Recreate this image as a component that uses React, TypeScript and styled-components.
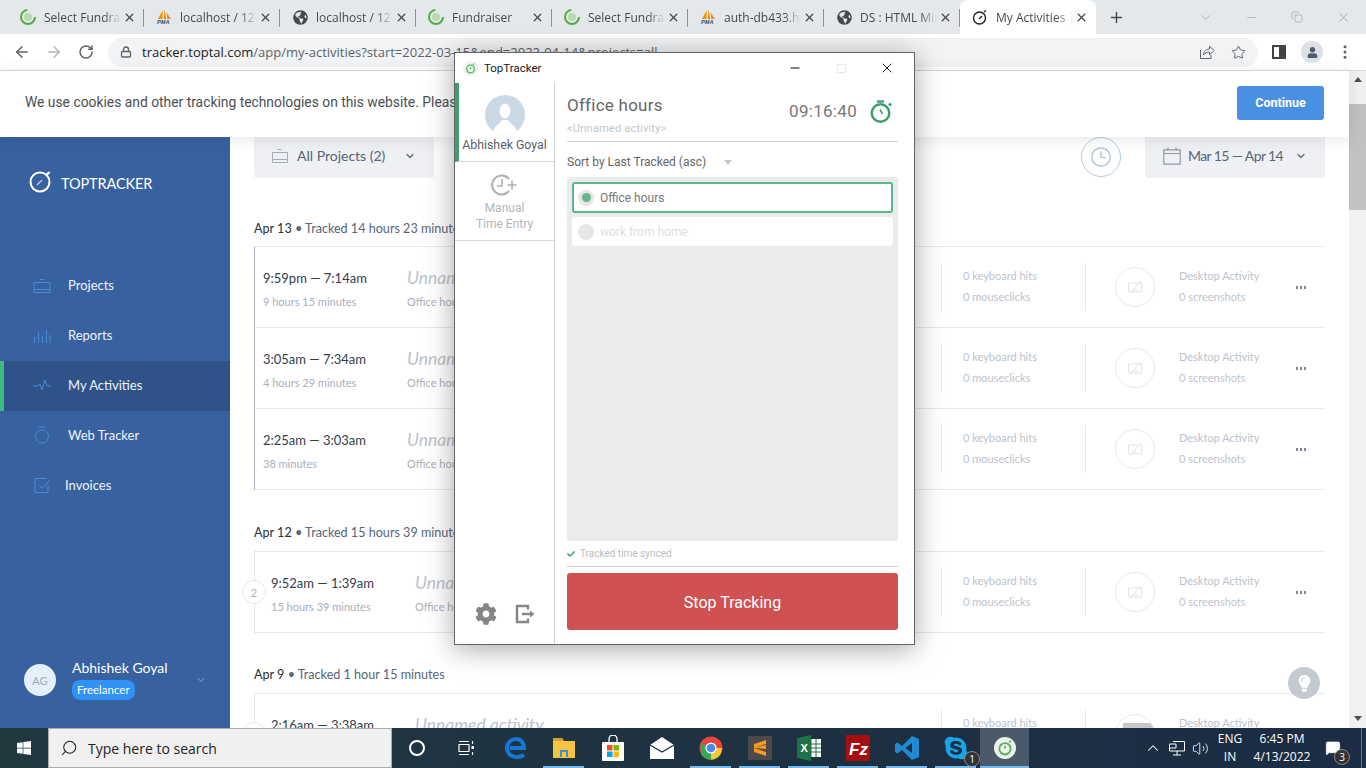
import React from "react";
import styled, { createGlobalStyle } from "styled-components";
import { ArrowLeft, ArrowRight, RotateCw, Lock, Star, MoreVertical, Plus, X, Minus, Square, Copy, ChevronDown, ChevronUp, Search, Volume2, MessageSquare } from "lucide-react";
import { FaGlobeAmericas, FaCog, FaWindows, FaSkype, FaLightbulb, FaCheck, FaUser } from "react-icons/fa";

const GlobalStyle = createGlobalStyle`
  html, body { margin: 0; padding: 0; height: 100%; overflow: hidden; background: #fff; }
  * { box-sizing: border-box; }
`;

const Screen = styled.div`
  position: relative;
  width: 1366px;
  height: 768px;
  display: flex;
  flex-direction: column;
  overflow: hidden;
  font-family: "Lato", sans-serif;
`;

/* browser chrome */
const TabStrip = styled.div`
  height: 34px;
  flex: none;
  display: flex;
  align-items: stretch;
  padding-left: 8px;
  background: #e5e8eb;
  font-family: "Open Sans", sans-serif;
`;
const Tab = styled.div<{ $active?: boolean }>`
  position: relative;
  width: 136px;
  display: flex;
  align-items: center;
  padding-left: 12px;
  background: ${({ $active }) => ($active ? "#fff" : "transparent")};
  border-radius: 8px 8px 0 0;
  &::after {
    content: "";
    display: ${({ $active }) => ($active ? "none" : "block")};
    position: absolute;
    right: 0;
    top: 9px;
    height: 18px;
    width: 1px;
    background: #8d9196;
  }
`;
const Favicon = styled.span`
  width: 16px;
  height: 16px;
  display: flex;
  align-items: center;
  justify-content: center;
  flex: none;
  color: #45494e;
`;
const TabTitle = styled.span`
  width: 77px;
  margin-left: 8px;
  font-size: 12px;
  color: #45494e;
  white-space: nowrap;
  overflow: hidden;
  -webkit-mask-image: linear-gradient(to right, #000 78%, transparent);
  mask-image: linear-gradient(to right, #000 78%, transparent);
`;
const TabClose = styled.span`
  margin-left: 2px;
  display: flex;
  color: #45494e;
`;
const NewTab = styled.span`
  display: flex;
  align-items: center;
  margin-left: 12px;
  color: #45494e;
`;
const WinControls = styled.div`
  margin-left: auto;
  display: flex;
  align-items: center;
  color: #8b8f94;
`;
const WinControl = styled.span`
  width: 46px;
  display: flex;
  justify-content: center;
`;

const Toolbar = styled.div`
  height: 37px;
  flex: none;
  display: flex;
  align-items: center;
  background: #fff;
  border-bottom: 1px solid #d8dadd;
`;
const NavButton = styled.span<{ $dim?: boolean }>`
  width: 32px;
  display: flex;
  justify-content: center;
  color: ${({ $dim }) => ($dim ? "#b4b7bb" : "#5f6368")};
  &:first-child { margin-left: 6px; }
`;
const UrlPill = styled.div`
  width: 1150px;
  height: 29px;
  margin-left: 6px;
  padding: 0 12px;
  display: flex;
  align-items: center;
  background: #f1f3f4;
  border-radius: 15px;
  font-family: "Open Sans", sans-serif;
  font-size: 13px;
  color: #5f6368;
  white-space: nowrap;
  overflow: hidden;
`;
const UrlHost = styled.span`
  margin-left: 10px;
  color: #202124;
`;
const PillIcons = styled.div`
  margin-left: auto;
  display: flex;
  gap: 16px;
  align-items: center;
  color: #5f6368;
`;
const ToolIcons = styled.div`
  display: flex;
  align-items: center;
  margin-left: 14px;
  color: #5f6368;
`;
const SidePanelIcon = styled.span`
  width: 14px;
  height: 14px;
  border: 2px solid #444;
  border-right-width: 7px;
`;
const ProfileBubble = styled.span`
  width: 22px;
  height: 22px;
  margin-left: 15px;
  border-radius: 50%;
  background: #dee1e6;
  color: #4b5a6c;
  display: flex;
  align-items: center;
  justify-content: center;
`;
const MenuDots = styled.span`
  display: flex;
  margin-left: 13px;
`;

/* page */
const Viewport = styled.div`
  flex: 1;
  min-height: 0;
  display: flex;
`;
const PageColumn = styled.div`
  flex: 1;
  min-width: 0;
  display: flex;
  flex-direction: column;
`;
const CookieBar = styled.div`
  position: relative;
  z-index: 2;
  height: 66px;
  flex: none;
  display: flex;
  align-items: center;
  justify-content: space-between;
  padding: 0 25px 3px;
  background: #fff;
  box-shadow: 0 2px 14px rgba(40, 50, 70, 0.12);
  font-family: "Roboto", sans-serif;
  font-size: 13.85px;
  color: #4c4f54;
`;
const CookieText = styled.span`
  margin-top: -2px;
`;
const ContinueButton = styled.button`
  width: 87px;
  height: 34px;
  border: none;
  border-radius: 3px;
  background: #4a90e2;
  color: #fff;
  font-family: "Roboto", sans-serif;
  font-size: 12.5px;
  font-weight: 700;
`;
const PageBody = styled.div`
  flex: 1;
  min-height: 0;
  display: flex;
`;
const Scrollbar = styled.div`
  width: 17px;
  flex: none;
  display: flex;
  flex-direction: column;
  align-items: center;
  background: #f1f1f1;
`;
const ScrollUp = styled.span`
  margin-top: 6px;
  border: 4px solid transparent;
  border-top: none;
  border-bottom: 5px solid #505050;
`;
const ScrollThumb = styled.div`
  width: 100%;
  height: 106px;
  margin-top: 22px;
  background: #c1c1c1;
`;
const ScrollDown = styled.span`
  margin-top: auto;
  margin-bottom: 7px;
  border: 4px solid transparent;
  border-bottom: none;
  border-top: 5px solid #505050;
`;

/* sidebar */
const Sidebar = styled.aside`
  width: 230px;
  flex: none;
  display: flex;
  flex-direction: column;
  background: #37629f;
  color: #fff;
`;
const Brand = styled.div`
  height: 124px;
  padding: 33px 0 0 29px;
  display: flex;
  align-items: flex-start;
  gap: 10px;
  font-size: 14.5px;
  line-height: 24px;
  letter-spacing: -0.1px;
`;
const BrandName = styled.span`
  padding-top: 2px;
`;
const NavItem = styled.div<{ $active?: boolean; $tight?: boolean }>`
  height: 50px;
  display: flex;
  align-items: center;
  padding-left: ${({ $active }) => ($active ? "29px" : "33px")};
  padding-bottom: 2px;
  gap: ${({ $tight }) => ($tight ? "14px" : "17px")};
  font-size: 13px;
  font-weight: 400;
  color: #eef3fb;
  background: ${({ $active }) => ($active ? "#2f5389" : "transparent")};
  border-left: ${({ $active }) => ($active ? "4px solid #3dbb83" : "none")};
`;
const UserBox = styled.div`
  margin: auto 0 32px 24px;
  height: 32px;
  display: flex;
  align-items: center;
  gap: 16px;
`;
const Initials = styled.span`
  width: 32px;
  height: 32px;
  flex: none;
  border-radius: 50%;
  background: #e6f0fb;
  color: #9aa8bb;
  display: flex;
  align-items: center;
  justify-content: center;
  font-size: 11px;
`;
const UserInfo = styled.div`
  width: 107px;
  align-self: flex-start;
  margin-top: -5px;
`;
const UserName = styled.div`
  font-size: 14px;
  line-height: 18px;
`;
const RoleBadge = styled.span`
  display: inline-block;
  margin-top: 3px;
  padding: 0 5px;
  height: 20px;
  line-height: 20px;
  border-radius: 8px;
  background: #3092f5;
  font-size: 11.5px;
  font-weight: 400;
`;
const UserChevron = styled.span`
  display: flex;
  color: #7ea6d8;
`;

/* content */
const Content = styled.main`
  position: relative;
  flex: 1;
  min-width: 0;
  padding: 0 24px;
  overflow: hidden;
`;
const FilterRow = styled.div`
  display: flex;
  align-items: flex-start;
`;
const Dropdown = styled.div`
  width: 180px;
  height: 41px;
  padding: 0 18px 4px;
  display: flex;
  align-items: center;
  background: #eff0f4;
  border-radius: 0 0 3px 3px;
  font-size: 14px;
  color: #56657a;
  &:first-child { margin-right: auto; }
`;
const DropLabel = styled.span<{ $tight?: boolean }>`
  margin-left: ${({ $tight }) => ($tight ? "7px" : "9px")};
  letter-spacing: ${({ $tight }) => ($tight ? "-0.6px" : "0")};
  white-space: nowrap;
`;
const DropChevron = styled.span`
  display: flex;
  margin-left: auto;
  color: #5c6675;
`;
const ClockButton = styled.span`
  width: 40px;
  height: 40px;
  margin-right: 24px;
  border-radius: 50%;
  border: 1px solid #b4cbdf;
  display: flex;
  align-items: center;
  justify-content: center;
`;
const DayHeading = styled.h3<{ $top: number; $bottom: number }>`
  margin: ${({ $top }) => $top}px 0 ${({ $bottom }) => $bottom}px;
  font-size: 12.6px;
  line-height: 18px;
  font-weight: 400;
  color: #56657a;
  white-space: nowrap;
`;
const DayDate = styled.span`
  color: #28303b;
`;
const RowGroup = styled.div<{ $stacked?: boolean }>`
  position: relative;
  border-top: 1px solid #e6e8ef;
  border-left: 1px solid ${({ $stacked }) => ($stacked ? "#aeb6c2" : "#e6e8ef")};
`;
const Row = styled.div<{ $indent?: boolean }>`
  height: 81px;
  display: flex;
  align-items: center;
  padding-left: ${({ $indent }) => ($indent ? "16px" : "8px")};
  border-bottom: 1px solid #e6e8ef;
`;
const TimeCol = styled.div`
  width: 144px;
  flex: none;
  padding-top: 6px;
`;
const TimeRange = styled.div`
  font-size: 13px;
  line-height: 18px;
  color: #333d4b;
  white-space: nowrap;
`;
const SubText = styled.div`
  margin-top: 6px;
  font-size: 11px;
  line-height: 18px;
  color: #a9afb9;
  white-space: nowrap;
`;
const NameCol = styled.div`
  flex: 1;
  min-width: 0;
  padding-top: 6px;
`;
const ActivityName = styled.div`
  font-size: 17.5px;
  line-height: 18px;
  font-style: italic;
  color: #bcc2cc;
  white-space: nowrap;
`;
const StatCol = styled.div`
  width: 144px;
  height: 48px;
  flex: none;
  padding: 0 0 2px 21px;
  border-left: 1px solid #e6e8ef;
  display: flex;
  flex-direction: column;
  justify-content: center;
  gap: 3px;
`;
const FaintLine = styled.div`
  font-size: 11px;
  line-height: 18px;
  color: #bcc2cc;
  white-space: nowrap;
`;
const ShotCol = styled.div`
  width: 240px;
  height: 48px;
  flex: none;
  padding-left: 29px;
  border-left: 1px solid #e6e8ef;
  display: flex;
  align-items: center;
`;
const ShotCircle = styled.span`
  width: 40px;
  height: 40px;
  flex: none;
  border-radius: 50%;
  border: 1px solid #e6e9f0;
  display: flex;
  align-items: center;
  justify-content: center;
  overflow: hidden;
`;
const ShotThumb = styled.span`
  width: 30px;
  height: 30px;
  margin: 8px 0 0 6px;
  background: #c8c8c8;
`;
const ShotText = styled.div`
  margin: -2px 0 0 24px;
  display: flex;
  flex-direction: column;
  gap: 3px;
`;
const MoreDots = styled.span`
  width: 12px;
  height: 3px;
  margin-left: auto;
  margin-right: 18px;
  background: radial-gradient(circle, #7f8896 1.2px, transparent 1.5px) 0 0 / 4px 3px repeat-x;
`;
const CountBadge = styled.span`
  position: absolute;
  left: -13px;
  top: 28px;
  width: 24px;
  height: 24px;
  border-radius: 50%;
  background: #fff;
  border: 1px solid #e6e8ef;
  color: #aab0bb;
  font-size: 11px;
  display: flex;
  align-items: center;
  justify-content: center;
`;
const HintButton = styled.span`
  position: absolute;
  right: 29px;
  bottom: 29px;
  width: 32px;
  height: 32px;
  border-radius: 50%;
  background: #c5c9d0;
  color: #fff;
  display: flex;
  align-items: center;
  justify-content: center;
`;

/* TopTracker desktop window */
const TrackerWindow = styled.section`
  position: absolute;
  z-index: 5;
  left: 454px;
  top: 52px;
  width: 461px;
  height: 593px;
  display: flex;
  flex-direction: column;
  background: #fff;
  border: 1px solid #666;
  box-shadow: 0 4px 26px rgba(0, 0, 0, 0.35);
  font-family: "Roboto", sans-serif;
`;
const TitleBar = styled.div`
  height: 30px;
  flex: none;
  display: flex;
  align-items: center;
  padding: 0 4px 0 8px;
  font-size: 11.5px;
  color: #1a1a1a;
`;
const TitleLabel = styled.span`
  margin-left: 6px;
  margin-right: auto;
`;
const TitleControl = styled.span<{ $muted?: boolean }>`
  width: 46px;
  display: flex;
  justify-content: center;
  color: ${({ $muted }) => ($muted ? "#c8c8c8" : "#000")};
`;
const WindowBody = styled.div`
  flex: 1;
  min-height: 0;
  display: flex;
`;
const LeftRail = styled.div`
  width: 100px;
  flex: none;
  display: flex;
  flex-direction: column;
  border-right: 1px solid #d0d0d0;
`;
const ProfileBlock = styled.div`
  height: 79px;
  padding: 12px 4px 0 0;
  display: flex;
  flex-direction: column;
  align-items: center;
  border-left: 4px solid #3e9e6e;
  border-bottom: 1px solid #d8d8d8;
  font-size: 12.3px;
  color: #5b6068;
  white-space: nowrap;
`;
const ProfileName = styled.span`
  margin-top: 2px;
  line-height: 16px;
`;
const AvatarCircle = styled.span`
  width: 40px;
  height: 40px;
  flex: none;
  border-radius: 50%;
  overflow: hidden;
  display: flex;
`;
const ManualBlock = styled.div`
  height: 79px;
  padding-top: 12px;
  display: flex;
  flex-direction: column;
  align-items: center;
  border-bottom: 1px solid #d8d8d8;
  font-size: 12px;
  line-height: 16px;
  color: #b5b5b5;
`;
const ManualLabel = styled.span`
  margin-top: 4px;
  text-align: center;
`;
const RailFooter = styled.div`
  margin-top: auto;
  padding: 0 0 19px 20px;
  display: flex;
  align-items: center;
  gap: 17px;
  color: #858585;
`;
const MainPane = styled.div`
  flex: 1;
  min-width: 0;
  display: flex;
  flex-direction: column;
  padding: 0 16px 14px 12px;
`;
const PaneHeader = styled.div`
  height: 59px;
  flex: none;
  display: flex;
  justify-content: space-between;
  padding: 11px 5px 0 0;
  border-bottom: 1px solid #cfcfcf;
`;
const PaneTitle = styled.div`
  font-size: 17px;
  line-height: 22px;
  letter-spacing: 0.25px;
  color: #666;
`;
const PaneSub = styled.div`
  margin-top: 5px;
  font-size: 11.4px;
  line-height: 14px;
  color: #c6c6c6;
`;
const TimerBox = styled.div`
  margin-top: 6px;
  height: 22px;
  display: flex;
  align-items: center;
  gap: 13px;
  font-size: 17px;
  letter-spacing: 0.3px;
  color: #777;
`;
const SortRow = styled.div`
  height: 35px;
  flex: none;
  padding-top: 5px;
  display: flex;
  align-items: center;
  font-size: 12px;
  color: #666;
`;
const SortArrow = styled.span`
  margin-left: 18px;
  border: 4px solid transparent;
  border-bottom: none;
  border-top: 5px solid #c8c8c8;
`;
const ProjectList = styled.div`
  flex: 1;
  min-height: 0;
  padding: 5px;
  display: flex;
  flex-direction: column;
  gap: 4px;
  background: #ebebeb;
  border-radius: 2px;
`;
const ProjectItem = styled.div<{ $selected?: boolean }>`
  height: ${({ $selected }) => ($selected ? "31px" : "29px")};
  padding-left: ${({ $selected }) => ($selected ? "4px" : "6px")};
  display: flex;
  align-items: center;
  gap: 6px;
  background: #fff;
  border: ${({ $selected }) => ($selected ? "2px solid #5cb88a" : "none")};
  border-radius: 3px;
  font-size: 12px;
  color: ${({ $selected }) => ($selected ? "#777" : "#dedede")};
`;
const ProjectDot = styled.span<{ $selected?: boolean }>`
  width: 16px;
  height: 16px;
  border-radius: 50%;
  background: #e6e6e6;
  display: flex;
  align-items: center;
  justify-content: center;
  &::after {
    content: "";
    display: ${({ $selected }) => ($selected ? "block" : "none")};
    width: 9px;
    height: 9px;
    border-radius: 50%;
    background: #66b58a;
  }
`;
const SyncRow = styled.div`
  height: 26px;
  flex: none;
  display: flex;
  align-items: center;
  gap: 5px;
  border-bottom: 1px solid #cfcfcf;
  font-size: 10px;
  color: #bdbdbd;
`;
const SyncCheck = styled.span`
  display: flex;
  color: #3c9e6a;
`;
const StopButton = styled.button`
  height: 57px;
  flex: none;
  margin-top: 6px;
  padding-top: 3px;
  border: none;
  border-radius: 3px;
  background: #cf5151;
  color: #fff;
  font-family: "Roboto", sans-serif;
  font-size: 16px;
`;

/* windows taskbar */
const Taskbar = styled.footer`
  height: 40px;
  flex: none;
  display: flex;
  align-items: stretch;
  background: linear-gradient(to right, #21383f, #1b2c44);
  color: #fff;
  font-family: "Open Sans", sans-serif;
`;
const StartButton = styled.span`
  width: 48px;
  display: flex;
  align-items: center;
  justify-content: center;
`;
const SearchBox = styled.div`
  width: 344px;
  display: flex;
  align-items: center;
  gap: 10px;
  padding-left: 11px;
  background: #f0f0f0;
  border: 1px solid #a9adb2;
  color: #222;
  font-size: 14px;
`;
const SearchGlass = styled.span`
  display: flex;
  transform: scaleX(-1);
`;
const TaskItem = styled.span<{ $open?: boolean; $active?: boolean }>`
  position: relative;
  width: 49px;
  display: flex;
  align-items: center;
  justify-content: center;
  background: ${({ $active }) => ($active ? "#4a5a6a" : "transparent")};
  &::after {
    content: "";
    display: ${({ $open }) => ($open ? "block" : "none")};
    position: absolute;
    left: ${({ $active }) => ($active ? "0" : "4px")};
    right: ${({ $active }) => ($active ? "0" : "4px")};
    bottom: 0;
    height: 2px;
    background: #76b9ed;
  }
`;
const CountDot = styled.span`
  position: absolute;
  right: 0;
  bottom: 1px;
  width: 16px;
  height: 16px;
  border-radius: 50%;
  background: #333;
  border: 1px solid #888;
  color: #fff;
  font-size: 10px;
  display: flex;
  align-items: center;
  justify-content: center;
`;
const Tray = styled.div`
  margin-left: auto;
  display: flex;
  align-items: center;
  font-size: 12px;
`;
const TrayIcon = styled.span<{ $w: number }>`
  width: ${({ $w }) => $w}px;
  display: flex;
  justify-content: center;
`;
const TrayText = styled.div<{ $w: number; $after: number }>`
  width: ${({ $w }) => $w}px;
  margin-right: ${({ $after }) => $after}px;
  text-align: center;
  line-height: 18px;
  white-space: nowrap;
`;
const Notification = styled.span`
  position: relative;
  width: 22px;
  display: flex;
  justify-content: center;
`;
const NotifCount = styled.span`
  position: absolute;
  right: -6px;
  bottom: -9px;
  width: 16px;
  height: 16px;
  border-radius: 50%;
  background: #333;
  border: 1px solid #888;
  font-size: 10px;
  display: flex;
  align-items: center;
  justify-content: center;
`;
const ShowDesktop = styled.span`
  position: relative;
  width: 22px;
  height: 100%;
  &::after {
    content: "";
    position: absolute;
    right: 4px;
    top: 0;
    bottom: 0;
    width: 1px;
    background: #6a7786;
  }
`;

/* drawings */
const FundIcon = () => (
  <svg width="16" height="16" viewBox="0 0 16 16">
    <circle cx="8" cy="8" r="7" fill="none" stroke="#4caf3f" strokeWidth="2" strokeDasharray="32 12" />
    <circle cx="8" cy="8" r="4" fill="#b9d8b0" />
  </svg>
);
const PmaIcon = () => (
  <svg width="17" height="16" viewBox="0 0 17 16">
    <path d="M2 10 L7 1 L7 10 Z M8 10 L9 0 L11 10 Z M12 10 L11 3 L16 10 Z" fill="#f29111" />
    <text x="1" y="15.5" fontSize="6" fontWeight="700" fontStyle="italic" fill="#33507f" fontFamily="Liberation Sans, sans-serif">PMA</text>
  </svg>
);
const StopwatchTab = () => (
  <svg width="16" height="16" viewBox="0 0 16 16" fill="none" stroke="#222" strokeWidth="1.4">
    <circle cx="7.5" cy="9" r="6" />
    <path d="M7 10 L10 7 M12 3 L14 1.5" />
  </svg>
);
const ShareGlyph = () => (
  <svg width="16" height="16" viewBox="0 0 16 16" fill="none" stroke="#5f6368" strokeWidth="1">
    <path d="M1.5 6 V14.5 H12 V11" />
    <path d="M4.5 11 C4.5 7 7.5 5 10.5 5 V2 L15 6.5 L10.5 11 V8 C8 8 6 8.8 4.5 11 Z" />
  </svg>
);
const LogoMark = () => (
  <svg width="22" height="24" viewBox="0 0 22 24" fill="none" stroke="#fff" strokeWidth="2">
    <circle cx="11" cy="12" r="9.5" />
    <path d="M8 15 L13 10" stroke="#b9cde8" strokeWidth="1.5" />
    <path d="M17.5 5 L20.5 2" strokeWidth="2.4" />
  </svg>
);
const NavIcon = ({ d, circle }: { d: string; circle?: boolean }) => (
  <svg width="18" height="18" viewBox="0 0 18 18" fill="none" stroke="#4a8bd8" strokeWidth="1">
    {circle && <circle cx="9" cy="10.5" r="6.5" />}
    <path d={d} />
  </svg>
);
const FolderGlyph = () => (
  <svg width="16" height="16" viewBox="0 0 16 16" fill="none" stroke="#a4adb9" strokeWidth="1">
    <path d="M.5 4.5 h15 v10 h-15 z M.5 11.5 h15 M5.5 1.5 h4" />
  </svg>
);
const CalendarGlyph = () => (
  <svg width="18" height="18" viewBox="0 0 18 18" fill="none" stroke="#8e99a8" strokeWidth="1.2">
    <path d="M.8 2.8 h16.4 v14.4 h-16.4 z M.8 6.5 h16.4 M5 .5 v3 M13 .5 v3" />
  </svg>
);
const ClockGlyph = () => (
  <svg width="20" height="20" viewBox="0 0 20 20" fill="none" stroke="#a4bdd5" strokeWidth="1.2">
    <circle cx="10" cy="10" r="9.2" />
    <path d="M10 4.5 V10.5 H15" />
  </svg>
);
const NoShotGlyph = () => (
  <svg width="16" height="14" viewBox="0 0 16 14" fill="none" stroke="#e0e4ea" strokeWidth="1">
    <path d="M1.5 3 h13 v9 h-13 z M3 13.5 L14 .5 M5 10 h6" />
  </svg>
);
const Stopwatch = () => (
  <svg width="23" height="23" viewBox="0 0 23 23" fill="none" stroke="#3c9e6a" strokeWidth="2.4">
    <circle cx="10.5" cy="13" r="8.8" />
    <path d="M7 1.5 h7" />
    <path d="M10 9.5 L12.5 14" strokeWidth="1.6" />
    <circle cx="20" cy="4.5" r="1.6" fill="#3c9e6a" stroke="none" />
  </svg>
);
const AppDot = ({ size = 14 }: { size?: number }) => (
  <svg width={size} height={size} viewBox="0 0 14 14" fill="none">
    <circle cx="7" cy="7" r="7" fill="#eef1ee" />
    <circle cx="7" cy="7.5" r="3.6" stroke="#56b45a" strokeWidth="1.2" />
    <path d="M7 5.5 V7.5 M9.5 3.5 L10.8 2.5" stroke="#56b45a" strokeWidth="1" />
  </svg>
);
const AvatarArt = () => (
  <svg width="40" height="40" viewBox="0 0 40 40">
    <rect width="40" height="40" fill="#cbd9e5" />
    <ellipse cx="20" cy="16" rx="5.5" ry="7.5" fill="#fff" />
    <path d="M7 40 C8 31 14 30 17 25 H23 C26 30 32 31 33 40 Z" fill="#fff" />
  </svg>
);
const ManualGlyph = () => (
  <svg width="27" height="22" viewBox="0 0 27 22" fill="none" stroke="#b0b0b0" strokeWidth="2">
    <path d="M18 5 A9.5 9.5 0 1 0 18 17" />
    <path d="M11 5 V12 H6" strokeWidth="1.6" />
    <path d="M21 6.5 V15.5 M16.5 11 H25.5" strokeWidth="1.6" />
  </svg>
);
const ExitGlyph = () => (
  <svg width="22" height="22" viewBox="0 0 22 22" fill="none" stroke="#858585" strokeWidth="2.4">
    <path d="M14 6.5 V3 H3 V19 H14 V15.5" />
    <path d="M8 11 H17" />
    <path d="M16 7.5 L20.5 11 L16 14.5 Z" fill="#858585" stroke="none" />
  </svg>
);
const EdgeIcon = () => (
  <svg width="24" height="24" viewBox="0 0 24 24" fill="none" stroke="#1478d4" strokeWidth="4">
    <path d="M21 19 C15 23 4 21 4 12 C4 5 12 1 17 4 C20 6 21 9 21 12 H7" />
  </svg>
);
const ExplorerIcon = () => (
  <svg width="24" height="22" viewBox="0 0 24 22">
    <path d="M1 1 H10 L12 4 H23 V21 H1 Z" fill="#f5c443" />
    <path d="M1 1 H10 L12 4 H1 Z" fill="#d99e25" />
    <path d="M8 20 V13 H16 V20 H14 V15 H10 V20 Z" fill="#3f8fd2" />
  </svg>
);
const StoreIcon = () => (
  <svg width="24" height="26" viewBox="0 0 24 26">
    <path d="M8 7 V4 A4 4 0 0 1 16 4 V7" fill="none" stroke="#fff" strokeWidth="1.3" />
    <rect x="1" y="7" width="22" height="19" rx="1" fill="#fff" />
    <rect x="6" y="10" width="5.5" height="5.5" fill="#f25022" />
    <rect x="12.5" y="10" width="5.5" height="5.5" fill="#7fba00" />
    <rect x="6" y="16.5" width="5.5" height="5.5" fill="#00a4ef" />
    <rect x="12.5" y="16.5" width="5.5" height="5.5" fill="#ffb900" />
  </svg>
);
const MailIcon = () => (
  <svg width="24" height="22" viewBox="0 0 24 22">
    <path d="M0 8 L12 0 L24 8 V22 H0 Z" fill="#fff" />
    <path d="M0 8 L12 15 L24 8" fill="none" stroke="#21363f" strokeWidth="1.4" />
  </svg>
);
const ChromeIcon = () => (
  <svg width="24" height="24" viewBox="0 0 24 24">
    <circle cx="12" cy="12" r="11.5" fill="#e8453c" />
    <path d="M12 12 L22 18 A11.5 11.5 0 0 1 2 18 L1.5 7 Z" fill="#3aa757" />
    <path d="M12 12 H23 A11.5 11.5 0 0 1 12 23.5 Z" fill="#fcc934" />
    <circle cx="12" cy="12" r="5.6" fill="#fff" />
    <circle cx="12" cy="12" r="4.3" fill="#4a8af4" />
  </svg>
);
const SublimeIcon = () => (
  <svg width="24" height="24" viewBox="0 0 24 24">
    <rect width="24" height="24" rx="2" fill="#4a4a4a" />
    <path d="M18 4 V8 L6 12 V8 Z M6 12 L18 16 V20 L6 16 Z M6 12 L18 9 V13 Z" fill="#f79a1d" />
  </svg>
);
const ExcelIcon = () => (
  <svg width="24" height="26" viewBox="0 0 24 26">
    <rect x="9" y="4" width="15" height="18" fill="#fff" />
    <path d="M14 4 V22 M19 4 V22 M9 9 H24 M9 13 H24 M9 17 H24" stroke="#1f7244" strokeWidth="1" />
    <path d="M0 3 L14 0 V26 L0 23 Z" fill="#1f7244" />
    <text x="3.5" y="17" fontSize="11" fontWeight="700" fill="#fff" fontFamily="Liberation Sans, sans-serif">X</text>
  </svg>
);
const FzIcon = () => (
  <svg width="24" height="26" viewBox="0 0 24 26">
    <rect width="24" height="26" fill="#a50f12" />
    <text x="3" y="20" fontSize="17" fontStyle="italic" fontWeight="700" fill="#fff" fontFamily="Liberation Sans, sans-serif">Fz</text>
  </svg>
);
const CodeIcon = () => (
  <svg width="24" height="24" viewBox="0 0 24 24">
    <path d="M17 0 L24 3 V21 L17 24 L7 14 L2.5 17.5 L0 16 V8 L2.5 6.5 L7 10 Z M17 7 L10.5 12 L17 17 Z" fill="#1f8ad2" fillRule="evenodd" />
  </svg>
);
const RingIcon = () => (
  <svg width="18" height="18" viewBox="0 0 18 18" fill="none" stroke="#fff" strokeWidth="2">
    <circle cx="9" cy="9" r="7" />
  </svg>
);
const TaskViewIcon = () => (
  <svg width="18" height="18" viewBox="0 0 18 18" fill="none" stroke="#fff" strokeWidth="1.2">
    <path d="M2 5.5 H12 V12.5 H2 Z M2 2.5 H12 M2 15.5 H12 M15.5 2 V5 M15.5 13 V16" />
    <rect x="14.5" y="7" width="2.4" height="3" fill="#fff" stroke="none" />
  </svg>
);
const NetworkIcon = () => (
  <svg width="18" height="16" viewBox="0 0 18 16" fill="none" stroke="#fff" strokeWidth="1">
    <path d="M5 1.5 H16.5 V11 H1.5 V4 H8 V8 H1.5 M9 11 V15 M5 15 H13" />
  </svg>
);

const tabs = [
  { title: "Select Fundraiser", icon: <FundIcon /> },
  { title: "localhost / 127.0.0.1", icon: <PmaIcon /> },
  { title: "localhost / 127.0.0.1", icon: <FaGlobeAmericas size={15} /> },
  { title: "Fundraiser", icon: <FundIcon /> },
  { title: "Select Fundraiser", icon: <FundIcon /> },
  { title: "auth-db433.hstgr.io", icon: <PmaIcon /> },
  { title: "DS : HTML Minifier", icon: <FaGlobeAmericas size={15} /> },
  { title: "My Activities | TopTracker", icon: <StopwatchTab />, active: true },
];

const navItems = [
  { label: "Projects", d: "M1 6.5 h16 v10 h-16 z M1 13.5 h16 M6.5 3.5 h5" },
  { label: "Reports", d: "M1.5 17 v-6 M5.5 17 v-11 M9.5 17 v-7 M13.5 17 v-13 M17 17 v-8" },
  { label: "My Activities", d: "M0 10 h5 l2 -2 l2 6 l3 -10 l2 6 h4", active: true },
  { label: "Web Tracker", d: "M5.5 1 h7", circle: true },
  { label: "Invoices", d: "M13 2.5 h-11 v14 h13 v-7 M6 9 l3.5 3.5 l7 -8", tight: true },
];

type Entry = { time: string; length: string; thumb?: boolean };
type Day = { date: string; tracked: string; top: number; bottom: number; stacked?: boolean; indent?: boolean; badge?: number; rows: Entry[] };
const days: Day[] = [
  {
    date: "Apr 13",
    tracked: "Tracked 14 hours 23 minutes",
    top: 42,
    bottom: 8,
    stacked: true,
    rows: [
      { time: "9:59pm — 7:14am", length: "9 hours 15 minutes" },
      { time: "3:05am — 7:34am", length: "4 hours 29 minutes" },
      { time: "2:25am — 3:03am", length: "38 minutes" },
    ],
  },
  {
    date: "Apr 12",
    tracked: "Tracked 15 hours 39 minutes",
    top: 34,
    bottom: 9,
    indent: true,
    badge: 2,
    rows: [{ time: "9:52am — 1:39am", length: "15 hours 39 minutes" }],
  },
  {
    date: "Apr 9",
    tracked: "Tracked 1 hour 15 minutes",
    top: 33,
    bottom: 9,
    indent: true,
    badge: 2,
    rows: [{ time: "2:16am — 3:38am", length: "1 hour 15 minutes", thumb: true }],
  },
];

const taskItems = [
  { icon: <RingIcon /> },
  { icon: <TaskViewIcon /> },
  { icon: <EdgeIcon /> },
  { icon: <ExplorerIcon />, open: true },
  { icon: <StoreIcon /> },
  { icon: <MailIcon /> },
  { icon: <ChromeIcon />, open: true },
  { icon: <SublimeIcon />, open: true },
  { icon: <ExcelIcon />, open: true },
  { icon: <FzIcon />, open: true },
  { icon: <CodeIcon />, open: true },
  { icon: <FaSkype size={26} color="#16a5e6" />, open: true, count: 1 },
  { icon: <AppDot size={22} />, open: true, active: true },
];

export default function App() {
  return (
    <Screen>
      <GlobalStyle />
      <TabStrip>
        {tabs.map((tab, i) => (
          <Tab key={i} $active={tab.active}>
            <Favicon>{tab.icon}</Favicon>
            <TabTitle>{tab.title}</TabTitle>
            <TabClose>
              <X size={13} strokeWidth={2.4} />
            </TabClose>
          </Tab>
        ))}
        <NewTab>
          <Plus size={17} strokeWidth={2} />
        </NewTab>
        <WinControls>
          <WinControl>
            <ChevronDown size={15} strokeWidth={1} />
          </WinControl>
          <WinControl>
            <Minus size={13} strokeWidth={1} />
          </WinControl>
          <WinControl>
            <Copy size={12} strokeWidth={1} />
          </WinControl>
          <WinControl>
            <X size={15} strokeWidth={1} />
          </WinControl>
        </WinControls>
      </TabStrip>

      <Toolbar>
        <NavButton>
          <ArrowLeft size={18} strokeWidth={2} />
        </NavButton>
        <NavButton $dim>
          <ArrowRight size={18} strokeWidth={2} />
        </NavButton>
        <NavButton>
          <RotateCw size={16} strokeWidth={2.2} />
        </NavButton>
        <UrlPill>
          <Lock size={12} strokeWidth={2.6} />
          <UrlHost>tracker.toptal.com</UrlHost>
          /app/my-activities?start=2022-03-15&end=2022-04-14&projects=all
          <PillIcons>
            <ShareGlyph />
            <Star size={15} strokeWidth={1.6} />
          </PillIcons>
        </UrlPill>
        <ToolIcons>
          <SidePanelIcon />
          <ProfileBubble>
            <FaUser size={11} />
          </ProfileBubble>
          <MenuDots>
            <MoreVertical size={18} />
          </MenuDots>
        </ToolIcons>
      </Toolbar>

      <Viewport>
        <PageColumn>
          <CookieBar>
            <CookieText>We use cookies and other tracking technologies on this website. Please see our policy.</CookieText>
            <ContinueButton>Continue</ContinueButton>
          </CookieBar>
          <PageBody>
            <Sidebar>
              <Brand>
                <LogoMark />
                <BrandName>TOPTRACKER</BrandName>
              </Brand>
              {navItems.map((item) => (
                <NavItem key={item.label} $active={item.active} $tight={item.tight}>
                  <NavIcon d={item.d} circle={item.circle} />
                  {item.label}
                </NavItem>
              ))}
              <UserBox>
                <Initials>AG</Initials>
                <UserInfo>
                  <UserName>Abhishek Goyal</UserName>
                  <RoleBadge>Freelancer</RoleBadge>
                </UserInfo>
                <UserChevron>
                  <ChevronDown size={12} />
                </UserChevron>
              </UserBox>
            </Sidebar>
            <Content>
              <FilterRow>
                <Dropdown>
                  <FolderGlyph />
                  <DropLabel>All Projects (2)</DropLabel>
                  <DropChevron>
                    <ChevronDown size={12} strokeWidth={2.4} />
                  </DropChevron>
                </Dropdown>
                <ClockButton>
                  <ClockGlyph />
                </ClockButton>
                <Dropdown>
                  <CalendarGlyph />
                  <DropLabel $tight>Mar 15 — Apr 14</DropLabel>
                  <DropChevron>
                    <ChevronDown size={12} strokeWidth={2.4} />
                  </DropChevron>
                </Dropdown>
              </FilterRow>
              {days.map((day) => (
                <React.Fragment key={day.date}>
                  <DayHeading $top={day.top} $bottom={day.bottom}>
                    <DayDate>{day.date}</DayDate> • {day.tracked}
                  </DayHeading>
                  <RowGroup $stacked={day.stacked}>
                    {day.badge && <CountBadge>{day.badge}</CountBadge>}
                    {day.rows.map((row) => (
                      <Row key={row.time} $indent={day.indent}>
                        <TimeCol>
                          <TimeRange>{row.time}</TimeRange>
                          <SubText>{row.length}</SubText>
                        </TimeCol>
                        <NameCol>
                          <ActivityName>Unnamed activity</ActivityName>
                          <SubText>Office hours</SubText>
                        </NameCol>
                        <StatCol>
                          <FaintLine>0 keyboard hits</FaintLine>
                          <FaintLine>0 mouseclicks</FaintLine>
                        </StatCol>
                        <ShotCol>
                          <ShotCircle>{row.thumb ? <ShotThumb /> : <NoShotGlyph />}</ShotCircle>
                          <ShotText>
                            <FaintLine>Desktop Activity</FaintLine>
                            <FaintLine>0 screenshots</FaintLine>
                          </ShotText>
                          <MoreDots />
                        </ShotCol>
                      </Row>
                    ))}
                  </RowGroup>
                </React.Fragment>
              ))}
              <HintButton>
                <FaLightbulb size={17} />
              </HintButton>
            </Content>
          </PageBody>
        </PageColumn>
        <Scrollbar>
          <ScrollUp />
          <ScrollThumb />
          <ScrollDown />
        </Scrollbar>
      </Viewport>

      <Taskbar>
        <StartButton>
          <FaWindows size={16} />
        </StartButton>
        <SearchBox>
          <SearchGlass>
            <Search size={18} strokeWidth={1.4} />
          </SearchGlass>
          Type here to search
        </SearchBox>
        {taskItems.map((item, i) => (
          <TaskItem key={i} $open={item.open} $active={item.active}>
            {item.icon}
            {item.count && <CountDot>{item.count}</CountDot>}
          </TaskItem>
        ))}
        <Tray>
          <TrayIcon $w={24}>
            <ChevronUp size={18} strokeWidth={1.4} />
          </TrayIcon>
          <TrayIcon $w={23}>
            <NetworkIcon />
          </TrayIcon>
          <TrayIcon $w={24}>
            <Volume2 size={17} strokeWidth={1.2} />
          </TrayIcon>
          <TrayText $w={36} $after={4}>
            ENG
            <br />
            IN
          </TrayText>
          <TrayText $w={60} $after={10}>
            6:45 PM
            <br />
            4/13/2022
          </TrayText>
          <Notification>
            <MessageSquare size={16} fill="#fff" strokeWidth={1} />
            <NotifCount>3</NotifCount>
          </Notification>
          <ShowDesktop />
        </Tray>
      </Taskbar>

      <TrackerWindow>
        <TitleBar>
          <AppDot size={15} />
          <TitleLabel>TopTracker</TitleLabel>
          <TitleControl>
            <Minus size={14} strokeWidth={1.8} />
          </TitleControl>
          <TitleControl $muted>
            <Square size={11} strokeWidth={1} />
          </TitleControl>
          <TitleControl>
            <X size={16} strokeWidth={1.3} />
          </TitleControl>
        </TitleBar>
        <WindowBody>
          <LeftRail>
            <ProfileBlock>
              <AvatarCircle>
                <AvatarArt />
              </AvatarCircle>
              <ProfileName>Abhishek Goyal</ProfileName>
            </ProfileBlock>
            <ManualBlock>
              <ManualGlyph />
              <ManualLabel>
                Manual
                <br />
                Time Entry
              </ManualLabel>
            </ManualBlock>
            <RailFooter>
              <FaCog size={22} />
              <ExitGlyph />
            </RailFooter>
          </LeftRail>
          <MainPane>
            <PaneHeader>
              <div>
                <PaneTitle>Office hours</PaneTitle>
                <PaneSub>&lt;Unnamed activity&gt;</PaneSub>
              </div>
              <TimerBox>
                09:16:40
                <Stopwatch />
              </TimerBox>
            </PaneHeader>
            <SortRow>
              Sort by Last Tracked (asc)
              <SortArrow />
            </SortRow>
            <ProjectList>
              <ProjectItem $selected>
                <ProjectDot $selected />
                Office hours
              </ProjectItem>
              <ProjectItem>
                <ProjectDot />
                work from home
              </ProjectItem>
            </ProjectList>
            <SyncRow>
              <SyncCheck>
                <FaCheck size={8} />
              </SyncCheck>
              Tracked time synced
            </SyncRow>
            <StopButton>Stop Tracking</StopButton>
          </MainPane>
        </WindowBody>
      </TrackerWindow>
    </Screen>
  );
}
